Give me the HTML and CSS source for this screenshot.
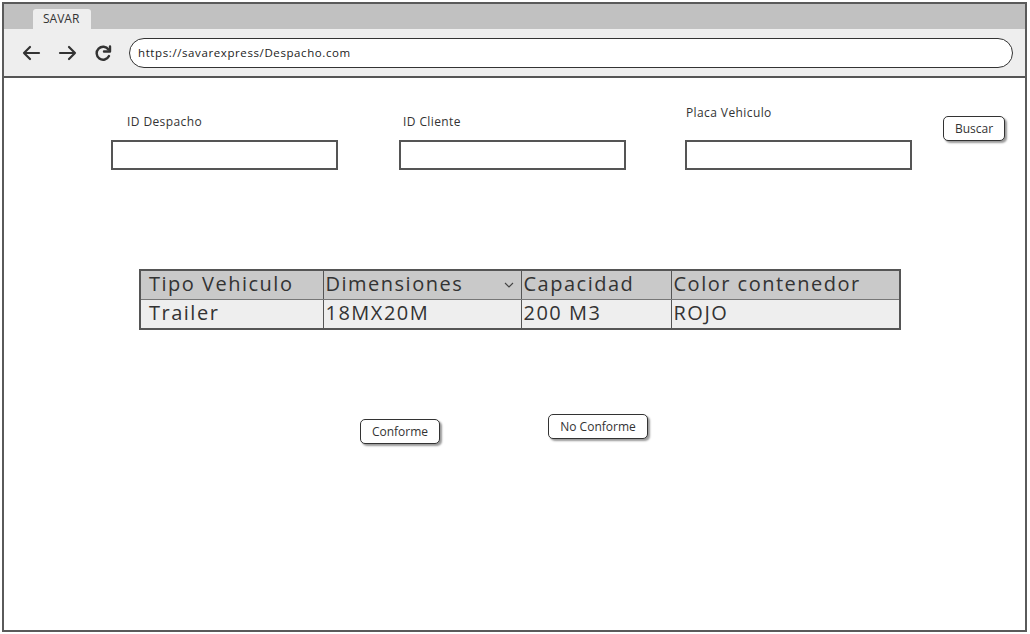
FILE: index.html
```html
<!DOCTYPE html>
<html lang="es">
<head>
<meta charset="utf-8">
<title>SAVAR</title>
<link rel="stylesheet" href="styles.css">
</head>
<body>
<div class="window">
  <div class="tabbar">
    <div class="tab">SAVAR</div>
  </div>
  <div class="toolbar">
    <svg class="nav-icon" width="20" height="16" viewBox="0 0 20 16"><path d="M18 8H3M9 2L3 8l6 6" fill="none" stroke="#333" stroke-width="2.2" stroke-linecap="round" stroke-linejoin="round"/></svg>
    <svg class="nav-icon fwd" width="20" height="16" viewBox="0 0 20 16"><path d="M2 8h15M11 2l6 6-6 6" fill="none" stroke="#333" stroke-width="2.2" stroke-linecap="round" stroke-linejoin="round"/></svg>
    <svg class="nav-icon reload" width="18" height="18" viewBox="0 0 18 18"><path d="M14.5 5.5A6.5 6.5 0 1 0 15 12" fill="none" stroke="#333" stroke-width="2.4" stroke-linecap="round"/><path d="M10 3.5h6v-5" fill="none" stroke="#333" stroke-width="2.4" stroke-linecap="round" stroke-linejoin="round" transform="translate(0 4)"/></svg>
    <div class="url">https://savarexpress/Despacho.com</div>
  </div>
  <div class="content">
    <div class="search-row">
      <div class="field f1">
        <label class="lbl">ID Despacho</label>
        <div class="input"></div>
      </div>
      <div class="field f2">
        <label class="lbl">ID Cliente</label>
        <div class="input"></div>
      </div>
      <div class="field f3">
        <label class="lbl">Placa Vehiculo</label>
        <div class="input"></div>
      </div>
      <button class="btn buscar">Buscar</button>
    </div>
    <table class="grid">
      <tr class="head">
        <th class="c1">Tipo Vehiculo</th>
        <th class="c2"><span>Dimensiones</span><svg class="chev" width="10" height="6" viewBox="0 0 10 6"><path d="M1 1l4 4 4-4" fill="none" stroke="#444" stroke-width="1.1"/></svg></th>
        <th class="c3">Capacidad</th>
        <th class="c4">Color contenedor</th>
      </tr>
      <tr class="row">
        <td class="c1">Trailer</td>
        <td class="c2">18MX20M</td>
        <td class="c3">200 M3</td>
        <td class="c4">ROJO</td>
      </tr>
    </table>
    <div class="actions">
      <button class="btn conforme">Conforme</button>
      <button class="btn noconforme">No Conforme</button>
    </div>
  </div>
</div>
</body>
</html>
```
FILE: styles.css
```css
* { box-sizing: border-box; }
html, body { margin: 0; padding: 0; background: #fff; }
body {
  font-family: "Open Sans", "Liberation Sans", sans-serif;
  color: #333;
  width: 1030px;
  height: 634px;
  overflow: hidden;
}
.window {
  margin: 2px 0 0 2px;
  width: 1025px;
  height: 630px;
  border: 2px solid #5a5a5a;
  display: flex;
  flex-direction: column;
}
.tabbar {
  height: 25px;
  background: #c1c1c1;
  padding: 5px 0 0 29px;
  flex: none;
}
.tab {
  width: 58px;
  height: 20px;
  background: #eeeeee;
  border-radius: 3px 3px 0 0;
  font-size: 12px;
  line-height: 20px;
  padding-left: 10px;
  color: #333;
}
.toolbar {
  height: 49px;
  background: #eeeeee;
  border-bottom: 2px solid #555;
  display: flex;
  align-items: center;
  padding-left: 17px;
  flex: none;
}
.nav-icon { flex: none; }
.nav-icon.fwd { margin-left: 17px; }
.nav-icon.reload { margin-left: 16px; }
.url {
  margin-left: 17px;
  width: 884px;
  height: 30px;
  border: 1.5px solid #333;
  border-radius: 15px;
  background: #fff;
  font-size: 11.5px;
  letter-spacing: 0.6px;
  line-height: 27px;
  padding-left: 8px;
  color: #222;
}
.content {
  flex: 1;
  background: #fff;
}
.search-row {
  display: flex;
  align-items: flex-end;
  height: 92px;
}
.field {
  display: flex;
  flex-direction: column;
  width: 227px;
}
.f1 { margin-left: 107px; }
.f2 { margin-left: 61px; }
.f3 { margin-left: 59px; }
.lbl {
  font-size: 12px;
  letter-spacing: 0.4px;
  line-height: 14px;
  color: #333;
  margin-bottom: 11px;
}
.f1 .lbl { padding-left: 16px; }
.f2 .lbl { padding-left: 4px; }
.f3 .lbl { padding-left: 1px; margin-bottom: 20px; }
.input {
  height: 30px;
  border: 2px solid #555;
  background: #fff;
}
.btn {
  font-family: inherit;
  font-size: 12px;
  color: #333;
  background: #fff;
  border: 1.5px solid #333;
  border-radius: 5px;
  box-shadow: 2px 2px 2px #9a9a9a;
  padding: 0;
  height: 25px;
  line-height: 21px;
}
.buscar {
  align-self: flex-start;
  margin-top: 38px;
  margin-left: 31px;
  width: 62px;
}
.grid {
  margin: 99px 0 0 135px;
  border-collapse: collapse;
  width: 762px;
  border: 2px solid #555;
  font-size: 20px;
  letter-spacing: 1.5px;
  line-height: 24px;
  color: #333;
}
.grid th, .grid td {
  border-left: 1.5px solid #555;
  border-right: 1.5px solid #555;
  text-align: left;
  font-weight: normal;
  padding: 0 0 2px 2px;
  white-space: nowrap;
}
.grid .head th { background: #c9c9c9; height: 29px; border-bottom: 1px solid #777; }
.grid .row td { background: #eeeeee; height: 30px; }
.grid .c1 { width: 183px; padding-left: 8px; }
.grid .c2 { width: 198px; }
.grid .c3 { width: 150px; }
.grid th.c2 span { display: inline-block; width: 178px; }
.chev { vertical-align: middle; }
.actions {
  display: flex;
  align-items: flex-start;
  margin-top: 84px;
}
.conforme {
  margin-top: 5px;
  margin-left: 356px;
  width: 80px;
}
.noconforme {
  margin-left: 108px;
  width: 100px;
}
```
